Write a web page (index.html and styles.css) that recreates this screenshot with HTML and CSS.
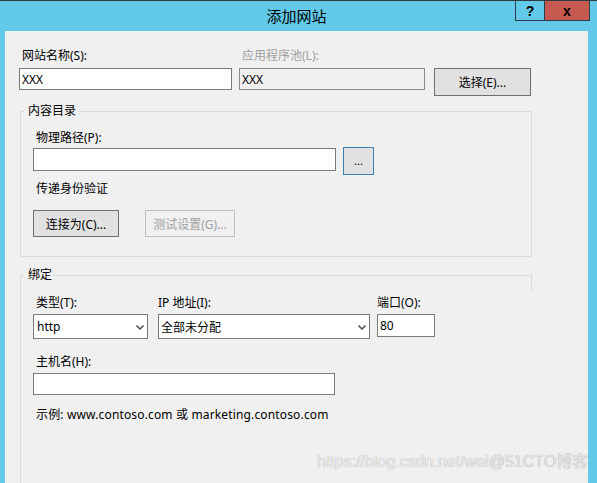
FILE: index.html
```html
<!DOCTYPE html>
<html lang="zh-CN">
<head>
<meta charset="utf-8">
<title>添加网站</title>
<link rel="stylesheet" href="styles.css">
</head>
<body>
<div class="window">
  <div class="titlebar">
    <span class="title">添加网站</span>
    <div class="wincontrols">
      <span class="wbtn help">?</span>
      <span class="wbtn close">x</span>
    </div>
  </div>
  <div class="client">
    <div class="site-row">
      <div class="field f-name">
        <label class="lbl">网站名称(S):</label>
        <input class="tb" type="text" value="XXX">
      </div>
      <div class="field f-pool">
        <label class="lbl disabled">应用程序池(L):</label>
        <input class="tb tb-disabled" type="text" value="XXX" disabled>
      </div>
      <button class="btn btn-select">选择(E)...</button>
    </div>

    <fieldset class="group group-content">
      <legend class="legend">内容目录</legend>
      <div class="group-body body-content">
        <label class="lbl">物理路径(P):</label>
        <div class="path-row">
          <input class="tb tb-path" type="text" value="">
          <button class="btn btn-browse">...</button>
        </div>
        <div class="lbl pass-lbl">传递身份验证</div>
        <div class="auth-row">
          <button class="btn btn-connect">连接为(C)...</button>
          <button class="btn btn-test" disabled>测试设置(G)...</button>
        </div>
      </div>
    </fieldset>

    <fieldset class="group group-binding">
      <legend class="legend">绑定</legend>
      <div class="group-body body-binding">
        <div class="bind-grid">
          <label class="lbl l-type">类型(T):</label>
          <label class="lbl l-ip">IP 地址(I):</label>
          <label class="lbl l-port">端口(O):</label>
          <div class="select sel-type">
            <span class="sel-text">http</span>
            <svg class="chev" width="8" height="5" viewBox="0 0 8 5"><path d="M0.5 0.5 L4 4 L7.5 0.5" fill="none" stroke="#5a5a5a" stroke-width="1.6"/></svg>
          </div>
          <div class="select sel-ip">
            <span class="sel-text">全部未分配</span>
            <svg class="chev" width="8" height="5" viewBox="0 0 8 5"><path d="M0.5 0.5 L4 4 L7.5 0.5" fill="none" stroke="#5a5a5a" stroke-width="1.6"/></svg>
          </div>
          <input class="tb tb-port" type="text" value="80">
        </div>
        <label class="lbl host-lbl">主机名(H):</label>
        <input class="tb tb-host" type="text" value="">
        <div class="lbl example">示例: www.contoso.com 或 marketing.contoso.com</div>
      </div>
    </fieldset>

    <div class="watermark">
      <span class="wm-url">https://blog.csdn.net/wei</span><span class="wm-51">@51CTO博客</span>
    </div>
  </div>
</div>
</body>
</html>
```

FILE: styles.css
```css
* { box-sizing: border-box; }
html, body { margin: 0; padding: 0; }
body {
  width: 597px;
  height: 483px;
  overflow: hidden;
  background: #63c9e9;
  font-family: "Noto Sans", "Noto Sans CJK SC", sans-serif;
  font-size: 12px;
  color: #000;
}
.window {
  width: 597px;
  height: 483px;
  background: #63c9e9;
  border-top: 1px solid #2e3a40;
  display: flex;
  flex-direction: column;
  overflow: hidden;
}
.titlebar {
  position: relative;
  height: 30px;
  flex: none;
  text-align: center;
}
.title {
  display: inline-block;
  margin-left: -4px;
  line-height: 30px;
  font-size: 15px;
  font-family: "Noto Sans CJK SC", sans-serif;
  color: #000;
}
.wincontrols {
  position: absolute;
  top: 0;
  left: 515px;
  display: flex;
}
.wbtn {
  display: flex;
  align-items: center;
  justify-content: center;
  height: 20px;
  border: 1px solid #2a3e4a;
  border-top: none;
  font-family: "Liberation Sans", sans-serif;
  font-weight: 900;
  font-size: 14px;
  color: #000;
}
.help { width: 29px; background: #63c9e9; border-right: none; }
.close { width: 46px; background: #c75a50; }

.client {
  flex: 1;
  margin-left: 5px;
  width: 583px;
  background: #f0f0f0;
  padding: 17px 0 0 14px;
  position: relative;
}
.lbl {
  display: block;
  line-height: 16px;
  height: 16px;
  white-space: nowrap;
}
.lbl.disabled { color: #a0a0a0; }

.site-row { display: flex; align-items: flex-start; }
.field { display: flex; flex-direction: column; gap: 4px; }
.field .lbl { padding-left: 3px; }
.f-name { width: 213px; margin-right: 7px; }
.f-pool { width: 186px; margin-right: 9px; }

.tb {
  display: block;
  height: 22px;
  border: 1px solid #7a7a7a;
  background: #fff;
  padding: 0 2px;
  font: inherit;
  font-size: 12px;
  color: #000;
  outline: none;
  margin: 0;
}
.tb-disabled { background: #f0f0f0; border-color: #8a8a8a; color: #000; }

.btn {
  display: block;
  margin: 0;
  padding: 0;
  font: inherit;
  font-size: 12px;
  color: #000;
  background: #e1e1e1;
  border: 1px solid #707070;
}
.btn-select { width: 97px; height: 28px; margin-top: 20px; }

.group {
  margin: 0 0 0 1px;
  padding: 0;
  width: 512px;
  min-width: 0;
  border: 1px solid #d5dce2;
  border-radius: 2px;
}
.legend {
  margin-left: 3px;
  padding: 0 2px 0 4px;
  line-height: 16px;
  font-size: 12px;
}
.group-content { margin-top: 7px; }
.body-content { padding: 11px 0 19px 12px; }
.body-content > .lbl { padding-left: 3px; }

.path-row { display: flex; align-items: flex-start; gap: 7px; margin-top: 1px; }
.tb-path { width: 303px; height: 23px; margin-top: 1px; }
.btn-browse {
  width: 31px; height: 28px;
  border-color: #3c7fb1;
  font-size: 11px;
  line-height: 20px;
}
.pass-lbl { margin-top: 6px; }
.auth-row { display: flex; gap: 26px; margin-top: 13px; }
.btn-connect { width: 86px; height: 27px; }
.btn-test {
  width: 90px; height: 27px;
  background: #f0f0f0;
  border-color: #bfbfbf;
  color: #a0a0a0;
}

.group-binding {
  margin-top: 10px;
  height: 300px;
  border-right-color: transparent;
  border-bottom-color: transparent;
  position: relative;
}
.group-binding::after {
  content: "";
  position: absolute;
  right: -1px;
  top: -9px;
  width: 1px;
  height: 18px;
  background: #d5dce2;
}
.body-binding { padding: 12px 0 0 12px; }
.bind-grid {
  display: grid;
  grid-template-columns: 115px 212px 58px;
  column-gap: 10px;
  row-gap: 3px;
  align-items: start;
}
.bind-grid .l-type { padding-left: 3px; }
.bind-grid .l-port { margin-left: -3px; }
.bind-grid .tb-port { margin-left: -3px; width: 58px; height: 23px; }
.select {
  height: 25px;
  border: 1px solid #7a7a7a;
  background: #fff;
  display: flex;
  align-items: center;
  justify-content: space-between;
  padding: 0 3px 0 3px;
}
.sel-ip { padding-left: 2px; }
.chev { margin-right: 0; margin-top: 2px; }
.host-lbl { margin-top: 15px; padding-left: 3px; }
.tb-host { width: 302px; margin-top: 3px; }
.example { margin-top: 12px; padding-left: 3px; letter-spacing: 0.15px; }

.watermark {
  position: absolute;
  left: 312px;
  top: 421px;
  font-family: "Liberation Sans", sans-serif;
  font-size: 16px;
  line-height: 20px;
  color: #ececec;
  text-shadow: 0 0 1px #9a9a9a;
  white-space: nowrap;
  display: flex;
}
.wm-51 { font-family: "Liberation Sans", "Noto Sans CJK SC", sans-serif; color: #e4e4e4; }
```
